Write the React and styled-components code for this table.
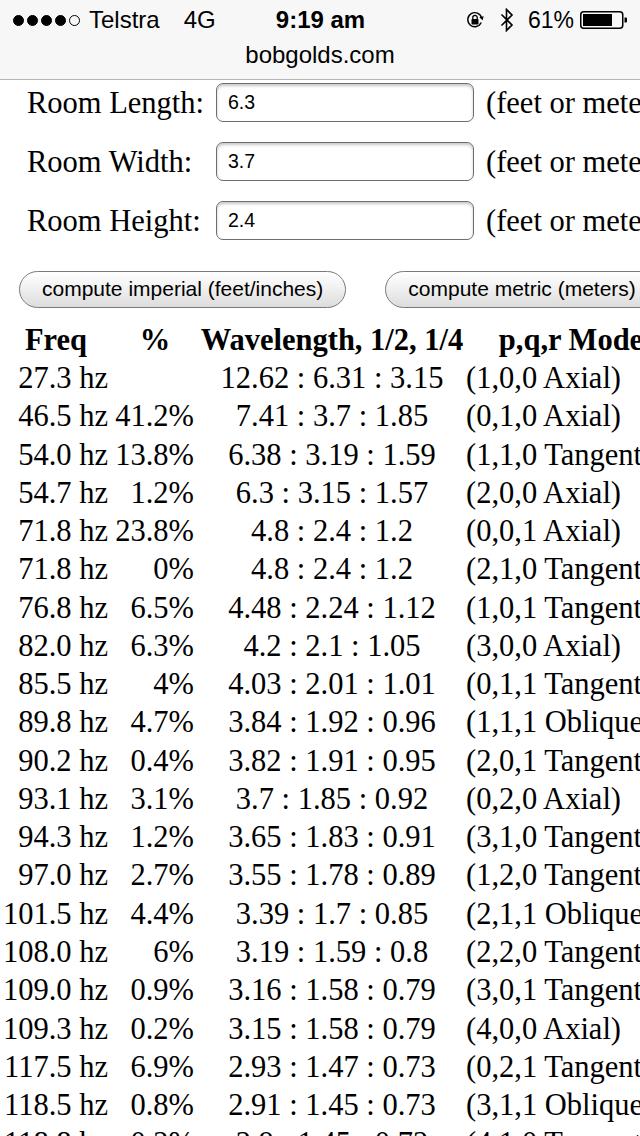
import React from 'react';
import styled, { createGlobalStyle } from 'styled-components';

const Global = createGlobalStyle`
  html, body { margin: 0; padding: 0; background: #fff; }
  body { width: 640px; height: 1136px; overflow: hidden; }
`;

const Screen = styled.div`
  width: 640px;
  height: 1136px;
  overflow: hidden;
  background: #fff;
`;

const Chrome = styled.header`
  height: 79px;
  background: #f7f7f7;
  border-bottom: 1px solid #b4b4b4;
  display: flex;
  flex-direction: column;
  font-family: "Liberation Sans", Arial, sans-serif;
  color: #000;
`;

const StatusBar = styled.div`
  height: 40px;
  display: grid;
  grid-template-columns: 1fr auto 1fr;
  align-items: center;
  padding: 0 12px 0 13px;
  font-size: 24px;
`;

const Left = styled.div`
  display: flex;
  align-items: center;
`;

const Dots = styled.div`
  display: flex;
  gap: 3px;
  margin-right: 9px;
`;

const Dot = styled.span`
  width: 11px;
  height: 11px;
  border-radius: 50%;
  box-sizing: border-box;
  background: ${p => (p.$on ? '#000' : 'transparent')};
  border: 1px solid #000;
`;

const Carrier = styled.span`
  margin-right: 24px;
`;

const Time = styled.div`
  font-weight: bold;
  font-size: 24px;
`;

const Right = styled.div`
  display: flex;
  align-items: center;
  justify-content: flex-end;
`;

const Pct = styled.span`
  font-size: 23px;
  margin: 0 6px 0 14px;
`;

const UrlBar = styled.div`
  flex: 1;
  display: flex;
  justify-content: center;
  padding-top: 1px;
  font-size: 24px;
`;

const Form = styled.div`
  display: grid;
  grid-template-columns: 189px 258px auto;
  grid-auto-rows: 39px;
  row-gap: 20px;
  padding: 3px 0 0 27px;
  align-items: center;
  font-family: "Liberation Serif", "Times New Roman", serif;
  font-size: 30.5px;
  white-space: nowrap;
`;

const Label = styled.span`
  padding-top: 2px;
`;

const Field = styled.input`
  box-sizing: border-box;
  width: 258px;
  height: 39px;
  margin: 0;
  border: 1.5px solid #6d6d6d;
  border-radius: 7px;
  box-shadow: inset 0 2px 3px rgba(0, 0, 0, 0.22);
  background: #fff;
  padding: 0 11px;
  font-family: "Liberation Sans", Arial, sans-serif;
  font-size: 19.5px;
  color: #000;
  outline: none;
`;

const Unit = styled.span`
  padding: 2px 0 0 12px;
`;

const Buttons = styled.div`
  display: flex;
  gap: 39px;
  padding: 31px 0 0 19px;
`;

const Button = styled.button`
  flex-shrink: 0;
  height: 37px;
  margin: 0;
  padding: 0 22px 2px;
  border: 1.5px solid #7a7a7a;
  border-radius: 19px;
  background: linear-gradient(#ffffff, #f1f1f1 45%, #dcdcdc);
  font-family: "Liberation Sans", Arial, sans-serif;
  font-size: 21px;
  color: #000;
  white-space: nowrap;
`;

const Table = styled.table`
  margin-top: 13px;
  table-layout: fixed;
  width: 676px;
  border-collapse: collapse;
  font-family: "Liberation Serif", "Times New Roman", serif;
  font-size: 30.5px;
  color: #000;
  white-space: nowrap;
`;

const Th = styled.th`
  height: 38px;
  padding: 0;
  line-height: 38px;
  font-weight: bold;
  text-align: center;
`;

const Td = styled.td`
  height: 38.26px;
  padding: 0 ${p => p.$pr || 0}px 0 0;
  line-height: 38.26px;
  text-align: ${p => p.$align};
`;

const rows = [
  ['27.3 hz', '', '12.62 : 6.31 : 3.15', '(1,0,0 Axial)'],
  ['46.5 hz', '41.2%', '7.41 : 3.7 : 1.85', '(0,1,0 Axial)'],
  ['54.0 hz', '13.8%', '6.38 : 3.19 : 1.59', '(1,1,0 Tangential)'],
  ['54.7 hz', '1.2%', '6.3 : 3.15 : 1.57', '(2,0,0 Axial)'],
  ['71.8 hz', '23.8%', '4.8 : 2.4 : 1.2', '(0,0,1 Axial)'],
  ['71.8 hz', '0%', '4.8 : 2.4 : 1.2', '(2,1,0 Tangential)'],
  ['76.8 hz', '6.5%', '4.48 : 2.24 : 1.12', '(1,0,1 Tangential)'],
  ['82.0 hz', '6.3%', '4.2 : 2.1 : 1.05', '(3,0,0 Axial)'],
  ['85.5 hz', '4%', '4.03 : 2.01 : 1.01', '(0,1,1 Tangential)'],
  ['89.8 hz', '4.7%', '3.84 : 1.92 : 0.96', '(1,1,1 Oblique)'],
  ['90.2 hz', '0.4%', '3.82 : 1.91 : 0.95', '(2,0,1 Tangential)'],
  ['93.1 hz', '3.1%', '3.7 : 1.85 : 0.92', '(0,2,0 Axial)'],
  ['94.3 hz', '1.2%', '3.65 : 1.83 : 0.91', '(3,1,0 Tangential)'],
  ['97.0 hz', '2.7%', '3.55 : 1.78 : 0.89', '(1,2,0 Tangential)'],
  ['101.5 hz', '4.4%', '3.39 : 1.7 : 0.85', '(2,1,1 Oblique)'],
  ['108.0 hz', '6%', '3.19 : 1.59 : 0.8', '(2,2,0 Tangential)'],
  ['109.0 hz', '0.9%', '3.16 : 1.58 : 0.79', '(3,0,1 Tangential)'],
  ['109.3 hz', '0.2%', '3.15 : 1.58 : 0.79', '(4,0,0 Axial)'],
  ['117.5 hz', '6.9%', '2.93 : 1.47 : 0.73', '(0,2,1 Tangential)'],
  ['118.5 hz', '0.8%', '2.91 : 1.45 : 0.73', '(3,1,1 Oblique)'],
  ['118.8 hz', '0.2%', '2.9 : 1.45 : 0.72', '(4,1,0 Tangential)'],
];

const RotationLock = () => (
  <svg width="18" height="18" viewBox="0 0 18 18">
    <path d="M15.2 11.5 A7 7 0 1 1 15.6 7" fill="none" stroke="#000" strokeWidth="1.4" />
    <path d="M13.4 6.2 L16.6 9.2 L17.6 5.2 Z" fill="#000" />
    <rect x="5.5" y="8" width="7" height="5.5" rx="0.8" fill="#000" />
    <path d="M6.8 8 V6.6 a2.2 2.2 0 0 1 4.4 0 V8" fill="none" stroke="#000" strokeWidth="1.3" />
  </svg>
);

const Bluetooth = () => (
  <svg width="14" height="24" viewBox="0 0 14 24" style={{ marginLeft: 16 }}>
    <path d="M1.5 6.5 L12 17 L6.5 22.5 V1.5 L12 7 L1.5 17.5" fill="none" stroke="#000" strokeWidth="1.6" strokeLinejoin="miter" />
  </svg>
);

const Battery = () => (
  <svg width="48" height="20" viewBox="0 0 48 20">
    <rect x="0.75" y="1.75" width="42" height="16.5" rx="3" fill="none" stroke="#000" strokeWidth="1.5" />
    <rect x="3" y="4" width="29" height="12" fill="#000" />
    <path d="M44.5 7.5 h1.5 a1 1 0 0 1 1 1 v3 a1 1 0 0 1 -1 1 h-1.5 Z" fill="#000" />
  </svg>
);

export default function App() {
  return (
    <Screen>
      <Global />
      <Chrome>
        <StatusBar>
          <Left>
            <Dots>
              {[1, 1, 1, 1, 0].map((on, i) => (
                <Dot key={i} $on={!!on} />
              ))}
            </Dots>
            <Carrier>Telstra</Carrier>
            <span>4G</span>
          </Left>
          <Time>9:19 am</Time>
          <Right>
            <RotationLock />
            <Bluetooth />
            <Pct>61%</Pct>
            <Battery />
          </Right>
        </StatusBar>
        <UrlBar>bobgolds.com</UrlBar>
      </Chrome>

      <Form>
        <Label>Room Length:</Label>
        <Field defaultValue="6.3" />
        <Unit>(feet or meters)</Unit>
        <Label>Room Width:</Label>
        <Field defaultValue="3.7" />
        <Unit>(feet or meters)</Unit>
        <Label>Room Height:</Label>
        <Field defaultValue="2.4" />
        <Unit>(feet or meters)</Unit>
      </Form>

      <Buttons>
        <Button>compute imperial (feet/inches)</Button>
        <Button>compute metric (meters)</Button>
      </Buttons>

      <Table>
        <colgroup>
          <col style={{ width: 112 }} />
          <col style={{ width: 86 }} />
          <col style={{ width: 268 }} />
          <col style={{ width: 210 }} />
        </colgroup>
        <thead>
          <tr>
            <Th>Freq</Th>
            <Th>%</Th>
            <Th>Wavelength, 1/2, 1/4</Th>
            <Th>p,q,r Mode</Th>
          </tr>
        </thead>
        <tbody>
          {rows.map((r, i) => (
            <tr key={i}>
              <Td $align="right" $pr={4}>{r[0]}</Td>
              <Td $align="right" $pr={4}>{r[1]}</Td>
              <Td $align="center">{r[2]}</Td>
              <Td $align="left">{r[3]}</Td>
            </tr>
          ))}
        </tbody>
      </Table>
    </Screen>
  );
}
